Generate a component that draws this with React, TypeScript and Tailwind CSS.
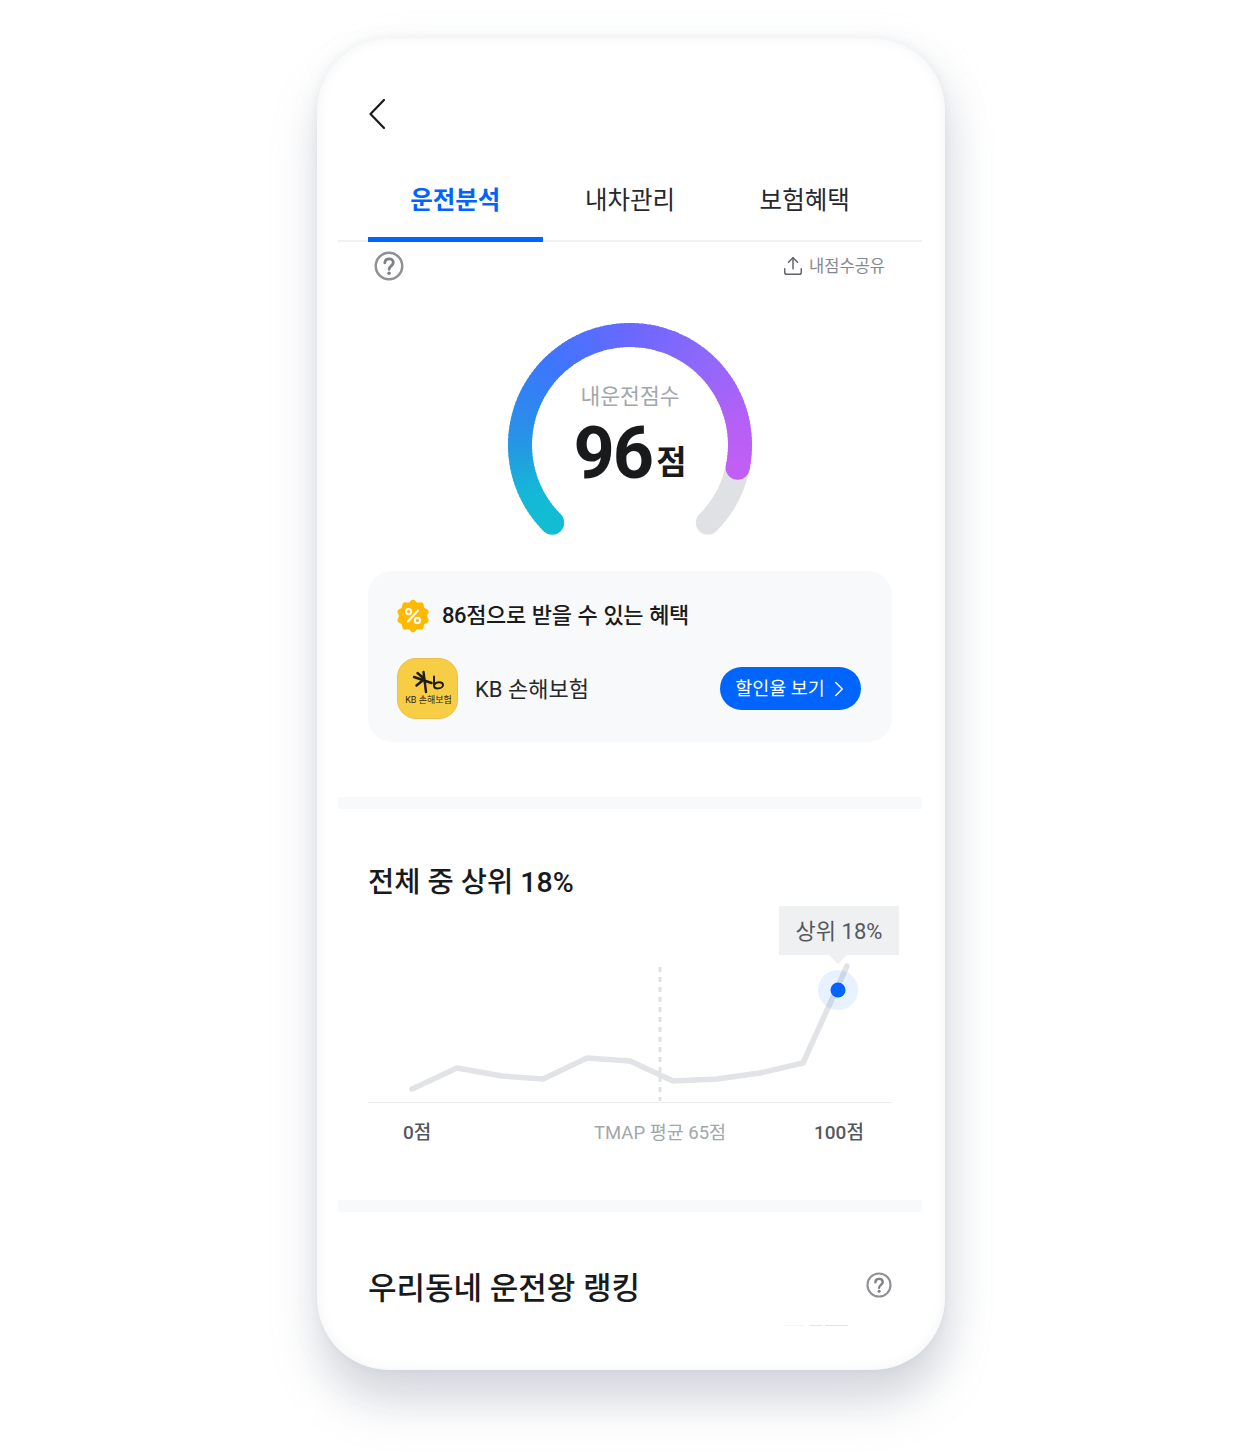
import React from "react";
import { ChevronRight, Upload } from "lucide-react";

const tabs = ["운전분석", "내차관리", "보험혜택"];

const stops: [number, number[]][] = [
  [0, [18, 189, 211]],
  [0.08, [20, 184, 214]],
  [0.19, [38, 150, 228]],
  [0.3, [50, 130, 245]],
  [0.38, [60, 118, 255]],
  [0.57, [106, 104, 255]],
  [0.76, [146, 104, 250]],
  [0.9, [180, 96, 246]],
  [1, [192, 94, 245]],
];

const colorAt = (t: number) => {
  for (let i = 1; i < stops.length; i++) {
    const [t0, c0] = stops[i - 1];
    const [t1, c1] = stops[i];
    if (t <= t1) {
      const k = (t - t0) / (t1 - t0);
      const c = c0.map((v, j) => Math.round(v + (c1[j] - v) * k));
      return `rgb(${c[0]},${c[1]},${c[2]})`;
    }
  }
  return "rgb(192,94,245)";
};

// clock angle in degrees, 0 at the top
const pt = (deg: number, r = 110, c = 122) => {
  const a = (deg * Math.PI) / 180;
  return [c + r * Math.sin(a), c - r * Math.cos(a)];
};

const arc = (from: number, to: number) => {
  const [x0, y0] = pt(from);
  const [x1, y1] = pt(to);
  const large = to - from > 180 ? 1 : 0;
  return `M${x0} ${y0}A110 110 0 ${large} 1 ${x1} ${y1}`;
};

const START = 225;
const END = 462; // purple end, past 360
const segments = Array.from({ length: 120 }, (_, i) => {
  const from = START + ((END - START) * i) / 120;
  const to = START + ((END - START) * (i + 1.4)) / 120;
  return { d: arc(from, Math.min(to, END)), color: colorAt(i / 119) };
});

const Gauge = () => (
  <div className="relative mx-auto h-[224px] w-[244px]">
    <svg width="244" height="224" viewBox="0 0 244 224" className="absolute left-0 top-0">
      <path d={arc(462, 495)} fill="none" stroke="#e0e1e5" strokeWidth="24" strokeLinecap="round" />
      {segments.map((s, i) => (
        <path key={i} d={s.d} fill="none" stroke={s.color} strokeWidth="24" />
      ))}
      <circle cx={pt(225)[0]} cy={pt(225)[1]} r="12" fill="#12bdd3" />
      <circle cx={pt(462)[0]} cy={pt(462)[1]} r="12" fill="#c05ef5" />
    </svg>
    <div className="absolute inset-x-0 top-[60px] text-center text-[21.5px] leading-[28px] text-[#a3a6ab]">내운전점수</div>
    <div className="absolute inset-x-0 top-[91px] flex items-baseline justify-center text-[#191a1c]">
      <span className="text-[72px] font-bold leading-[80px] tracking-[-2px]">96</span>
      <span className="relative -top-[4px] ml-[4px] text-[33px] font-bold leading-[44px]">점</span>
    </div>
  </div>
);

const scallop = (() => {
  const pts: string[] = [];
  for (let i = 0; i < 120; i++) {
    const a = (i / 120) * Math.PI * 2;
    const r = 15.2 + 1.1 * Math.cos(a * 10);
    pts.push(`${(17 + r * Math.sin(a)).toFixed(2)},${(17 - r * Math.cos(a)).toFixed(2)}`);
  }
  return pts.join(" ");
})();

const PercentBadge = () => (
  <svg width="34" height="34" viewBox="0 0 34 34" className="-ml-[1px] shrink-0">
    <polygon points={scallop} fill="#ffb900" />
    <circle cx="12.6" cy="12.6" r="2.6" fill="none" stroke="#fff" strokeWidth="2" />
    <circle cx="21.4" cy="21.4" r="2.6" fill="none" stroke="#fff" strokeWidth="2" />
    <path d="M22 11.5 12 22.5" stroke="#fff" strokeWidth="2" strokeLinecap="round" />
  </svg>
);

const KbLogo = () => (
  <div className="flex h-[61px] w-[61px] shrink-0 flex-col items-center rounded-[19px] border border-[#e8c04a] bg-[#f8cd46]">
    <svg width="36" height="24" viewBox="12.500 12 36 24" className="mt-[11px]" fill="none" stroke="#1f1c14" strokeLinecap="round">
      <path d="M16.500 19 34 25M26 14l2.500 20M19 27.500 27 21M20 15l7 6" strokeWidth="2.400" />
      <path d="M36.500 18.500v9c0 2 1.500 3 3.500 3 3 0 5.500-1.500 5.500-3.500s-2-2.800-3.800-2.800c-2 0-4 1-5.200 2.800" strokeWidth="2" />
    </svg>
    <span className="ml-[2px] mt-[1px] whitespace-nowrap text-[9px] leading-[11px] text-[#2c2818]">KB 손해보험</span>
  </div>
);

const HelpIcon = ({ size, stroke }: { size: number; stroke: number }) => (
  <svg width={size} height={size} viewBox="0 0 30 30" fill="none">
    <circle cx="15" cy="15" r={14 - stroke / 2 + 0.5} stroke="#8e9094" strokeWidth={stroke} />
    <path d="M10.800 11.800c.2-2.500 2-3.900 4.300-3.900 2.400 0 4.200 1.500 4.200 3.600 0 3.300-4.200 3.500-4.200 6.800" stroke="#7f8185" strokeWidth="2.800" strokeLinecap="round" />
    <circle cx="15.100" cy="22.200" r="1.800" fill="#7f8185" />
  </svg>
);

const Chart = () => (
  <div className="relative h-[197px] border-b border-[#ecedef]">
    <svg width="524" height="196" viewBox="0 0 524 196" className="absolute left-0 top-0">
      <path d="M292 61V195" stroke="#dfe1e4" strokeWidth="3" strokeDasharray="5 5" />
      <polyline
        points="44,183 89,162 134,170 175,173 219,152 262,155 305,175 349,173 392,167 435,157 479,60"
        fill="none"
        stroke="#e1e3e6"
        strokeWidth="5.500"
        strokeLinecap="round"
        strokeLinejoin="round"
      />
      <circle cx="470" cy="84" r="20" fill="#0064ff" fillOpacity="0.09" />
      <circle cx="470" cy="84" r="7.500" fill="#0064ff" />
    </svg>
    <div className="absolute left-[411px] top-0 flex h-[49px] w-[120px] items-center justify-center bg-[#eff0f2] pt-[1px] text-[22px] text-[#55585e]">
      상위 18%
      <span className="absolute left-[50px] top-[49px] h-0 w-0 border-x-[9px] border-t-[9px] border-x-transparent border-t-[#eff0f2]" />
    </div>
  </div>
);

export default function App() {
  return (
    <div className="min-h-[1452px] bg-white pt-[38px] font-['Roboto','Noto_Sans_CJK_KR',sans-serif]">
      <div className="ml-[317px] flex h-[1332px] w-[628px] flex-col overflow-hidden rounded-[72px] bg-white pl-[21px] pr-[23px] shadow-[inset_0_0_12px_rgba(190,195,205,0.22),0_34px_44px_rgba(150,156,170,0.34),12px_10px_40px_rgba(170,176,190,0.14),0_0_10px_rgba(190,195,205,0.2)]">
        <div className="pl-[31px] pt-[61px]">
          <svg width="16" height="30" viewBox="0 0 16 30" fill="none">
            <path d="M15 1 1.500 15 15 29" stroke="#191a1c" strokeWidth="2.200" strokeLinecap="round" strokeLinejoin="round" />
          </svg>
        </div>

        <div className="mt-[35px] border-b-2 border-[#f1f2f4] px-[30px]">
          <div className="flex">
            {tabs.map((t, i) => (
              <div
                key={t}
                className={
                  i === 0
                    ? "-mb-[2px] flex h-[78px] w-[175px] justify-center border-b-[5px] border-[#0064ff] pt-[19px] text-[24.5px] leading-[36px] font-bold text-[#0064ff]"
                    : "-mb-[2px] flex h-[78px] w-[175px] justify-center border-b-[5px] border-transparent pt-[19px] text-[24.5px] leading-[36px] text-[#26282c]"
                }
              >
                {t}
              </div>
            ))}
          </div>
        </div>

        <div className="flex items-center justify-between pl-[36px] pr-[37px] pt-[9px]">
          <HelpIcon size={30} stroke={2.5} />
          <div className="flex items-center gap-[5px] text-[16.5px] text-[#85888d]">
            <Upload size={22} strokeWidth={1.6} className="text-[#5f6267]" />
            <span className="pt-[2px]">내점수공유</span>
          </div>
        </div>

        <div className="mt-[42px]">
          <Gauge />
        </div>

        <div className="mx-[30px] mt-[24px] flex h-[171px] flex-col rounded-[24px] bg-[#f8f9fa] px-[29px]">
          <div className="mt-[28px] flex items-center gap-[12px]">
            <PercentBadge />
            <span className="text-[22px] font-medium leading-[34px] tracking-[-0.4px] [word-spacing:1px] text-[#191a1c]">86점으로 받을 수 있는 혜택</span>
          </div>
          <div className="mt-[25px] flex items-center">
            <KbLogo />
            <span className="ml-[17px] pt-[1px] text-[22px] text-[#26282c]">KB 손해보험</span>
            <button className="ml-auto mr-[2px] flex h-[43px] w-[141px] items-center justify-center gap-[1px] rounded-full bg-[#0064ff] pl-[6px] text-[18.500px] text-white">
              <span className="pt-[2px]">할인율 보기</span>
              <ChevronRight size={26} strokeWidth={1.4} />
            </button>
          </div>
        </div>

        <div className="mt-[55px] h-[12px] bg-[#f8f9fa]" />

        <div className="px-[30px]">
          <h2 className="mt-[52px] text-[28.500px] font-medium leading-[44px] text-[#191a1c]">전체 중 상위 18%</h2>
          <div className="mt-[1px]">
            <Chart />
          </div>
          <div className="mt-[16px] flex leading-[28px]">
            <span className="ml-[35px] w-[191px] text-[19px] font-medium text-[#55585e]">0점</span>
            <span className="w-[220px] text-[18.500px] text-[#a3a6ab]">TMAP 평균 65점</span>
            <span className="text-[19px] font-medium text-[#55585e]">100점</span>
          </div>
        </div>

        <div className="mt-[53px] h-[12px] bg-[#f8f9fa]" />

        <div className="mt-[52px] flex items-center justify-between px-[30px]">
          <h2 className="text-[31px] font-medium leading-[50px] text-[#191a1c]">우리동네 운전왕 랭킹</h2>
          <div className="-mt-[8px]">
            <HelpIcon size={26} stroke={2.4} />
          </div>
        </div>

        <div className="mt-[11px] flex h-[1px] justify-end gap-[3px] pr-[74px]">
          <div className="mr-[2px] h-[1px] w-[22px] bg-[#f4f4f4]" />
          <div className="h-[1px] w-[12px] bg-[#e4e4e4]" />
          <div className="h-[1px] w-[23px] bg-[#e4e4e4]" />
        </div>
      </div>
    </div>
  );
}
